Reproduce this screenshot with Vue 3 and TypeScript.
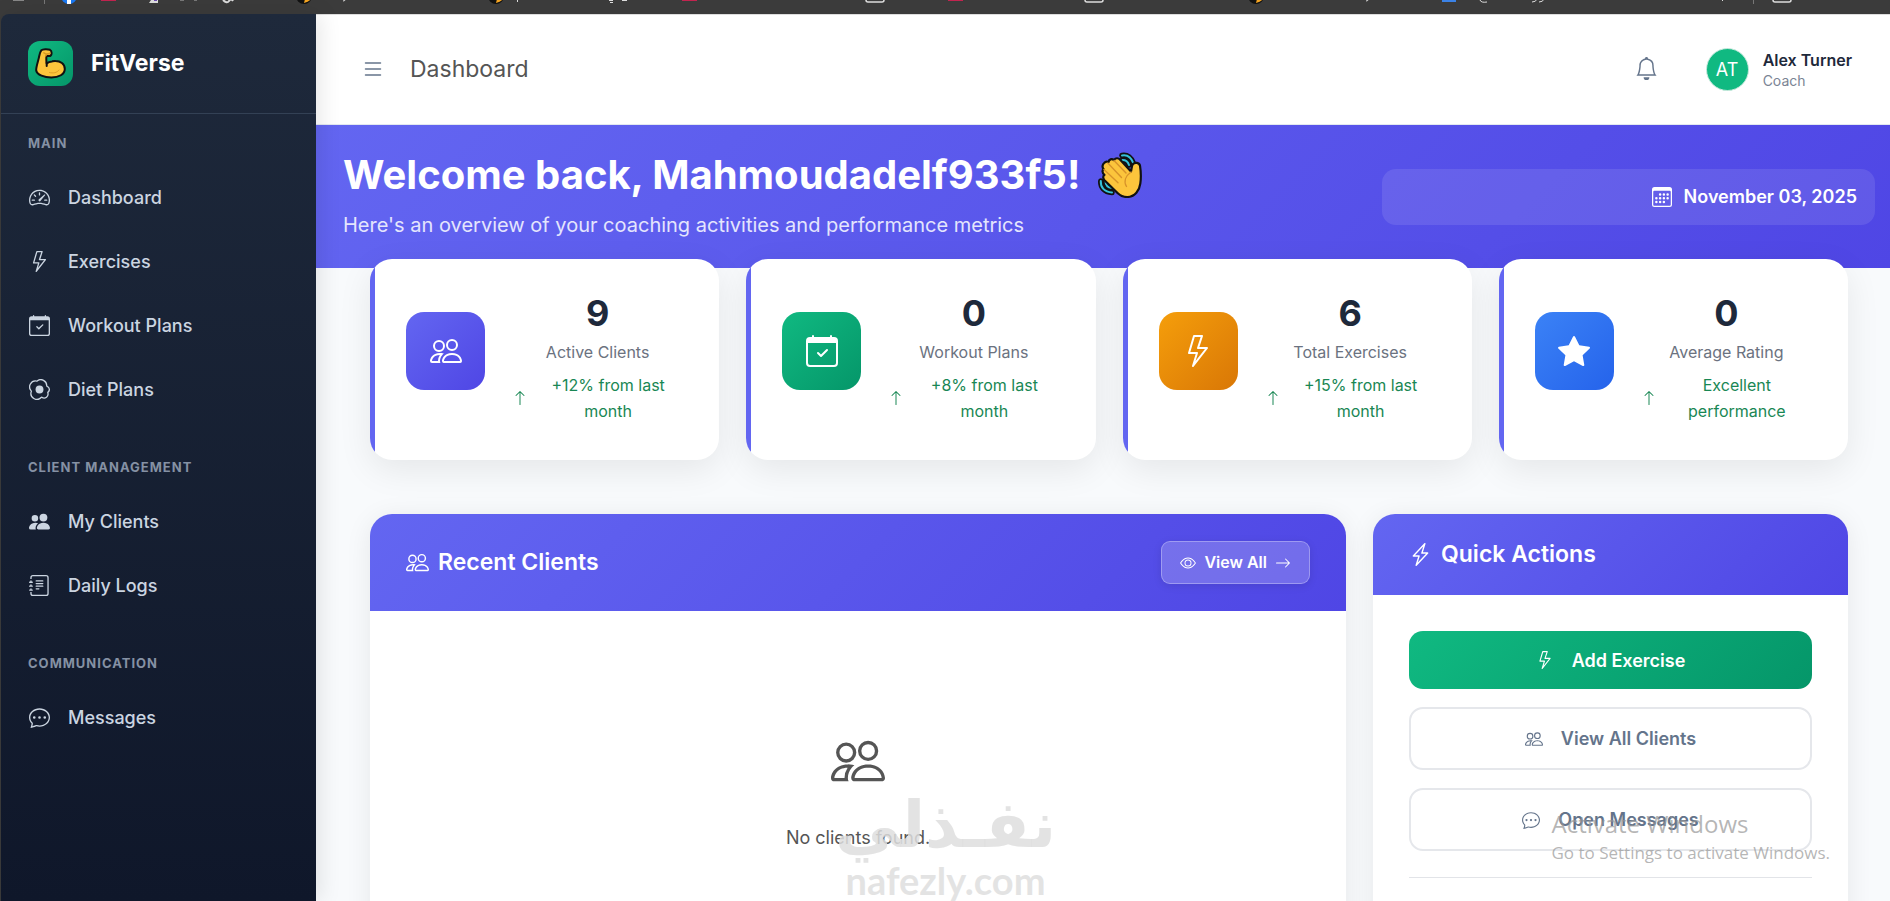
<script setup lang="ts">
import { h, type FunctionalComponent } from 'vue'

const icons: Record<string, string[]> = {
  speedometer: [
    'M8 4a.5.5 0 0 1 .5.5V6a.5.5 0 0 1-1 0V4.5A.5.5 0 0 1 8 4M3.732 5.732a.5.5 0 0 1 .707 0l.915.914a.5.5 0 1 1-.708.708l-.914-.915a.5.5 0 0 1 0-.707M2 10a.5.5 0 0 1 .5-.5h1.586a.5.5 0 0 1 0 1H2.5A.5.5 0 0 1 2 10m9.5 0a.5.5 0 0 1 .5-.5h1.5a.5.5 0 0 1 0 1H12a.5.5 0 0 1-.5-.5m.754-4.246a.39.39 0 0 0-.527-.02L7.547 9.31a.91.91 0 1 0 1.302 1.258l3.434-4.297a.39.39 0 0 0-.029-.518z',
    'M0 10a8 8 0 1 1 15.547 2.661c-.442 1.253-1.845 1.602-2.932 1.25C11.309 13.488 9.475 13 8 13c-1.474 0-3.31.488-4.615.911-1.087.352-2.49.003-2.932-1.25A8 8 0 0 1 0 10m8-7a7 7 0 0 0-6.603 9.329c.203.575.923.876 1.68.63C4.397 12.533 6.358 12 8 12s3.604.532 4.923.96c.757.245 1.477-.056 1.68-.631A7 7 0 0 0 8 3',
  ],
  lightning: [
    'M5.52.359A.5.5 0 0 1 6 0h4a.5.5 0 0 1 .474.658L8.694 6H12.5a.5.5 0 0 1 .395.807l-7 9a.5.5 0 0 1-.873-.454L6.823 9.5H3.5a.5.5 0 0 1-.48-.641zM6.374 1 4.168 8.5H7.5a.5.5 0 0 1 .478.647L6.78 13.04 11.478 7H8a.5.5 0 0 1-.474-.658L9.306 1z',
  ],
  charge: [
    'M11.251.068a.5.5 0 0 1 .227.58L9.677 6.5H13a.5.5 0 0 1 .364.843l-8 8.5a.5.5 0 0 1-.842-.49L6.323 9.5H3a.5.5 0 0 1-.364-.843l8-8.5a.5.5 0 0 1 .615-.09zM4.157 8.5H7a.5.5 0 0 1 .478.647L6.11 13.59l5.732-6.09H9a.5.5 0 0 1-.478-.647L9.89 2.41z',
  ],
  calendarCheck: [
    'M10.854 7.146a.5.5 0 0 1 0 .708l-3 3a.5.5 0 0 1-.708 0l-1.5-1.5a.5.5 0 1 1 .708-.708L7.5 9.793l2.646-2.647a.5.5 0 0 1 .708 0',
    'M3.5 0a.5.5 0 0 1 .5.5V1h8V.5a.5.5 0 0 1 1 0V1h1a2 2 0 0 1 2 2v11a2 2 0 0 1-2 2H2a2 2 0 0 1-2-2V3a2 2 0 0 1 2-2h1V.5a.5.5 0 0 1 .5-.5M1 4v10a1 1 0 0 0 1 1h12a1 1 0 0 0 1-1V4z',
  ],
  egg: [
    'M8 11a3 3 0 1 0 0-6 3 3 0 0 0 0 6',
    'M13.997 5.17a5 5 0 0 0-8.101-4.09A5 5 0 0 0 1.28 9.342a5 5 0 0 0 8.336 5.109 3.5 3.5 0 0 0 5.201-4.065 3.001 3.001 0 0 0-.822-5.216zm-1-.034a1 1 0 0 0 .668.977 2.001 2.001 0 0 1 .547 3.478 1 1 0 0 0-.341 1.113 2.5 2.5 0 0 1-3.715 2.905 1 1 0 0 0-1.262.152 4 4 0 0 1-6.67-4.087 1 1 0 0 0-.2-1 4 4 0 0 1 3.693-6.61 1 1 0 0 0 .8-.2 4 4 0 0 1 6.48 3.273z',
  ],
  people: [
    'M15 14s1 0 1-1-1-4-5-4-5 3-5 4 1 1 1 1zm-7.978-1L7 12.996c.001-.264.167-1.03.76-1.72C8.312 10.629 9.282 10 11 10c1.717 0 2.687.63 3.24 1.276.593.69.758 1.457.76 1.72l-.008.002-.014.002zM11 7a2 2 0 1 0 0-4 2 2 0 0 0 0 4m3-2a3 3 0 1 1-6 0 3 3 0 0 1 6 0M6.936 9.28a6 6 0 0 0-1.23-.247A7 7 0 0 0 5 9c-4 0-5 3-5 4q0 1 1 1h4.216A2.24 2.24 0 0 1 5 13c0-1.01.377-2.042 1.09-2.904.243-.294.526-.569.846-.816M4.92 10A5.5 5.5 0 0 0 4 13H1c0-.26.164-1.03.76-1.724.545-.636 1.492-1.256 3.16-1.275ZM1.5 5.5a3 3 0 1 1 6 0 3 3 0 0 1-6 0m3-2a2 2 0 1 0 0 4 2 2 0 0 0 0-4',
  ],
  peopleFill: [
    'M7 14s-1 0-1-1 1-4 5-4 5 3 5 4-1 1-1 1zm4-6a3 3 0 1 0 0-6 3 3 0 0 0 0 6m-5.784 6A2.24 2.24 0 0 1 5 13c0-1.355.68-2.75 1.936-3.72A6.3 6.3 0 0 0 5 9c-4 0-5 3-5 4s1 1 1 1zM4.5 8a2.5 2.5 0 1 0 0-5 2.5 2.5 0 0 0 0 5',
  ],
  journal: [
    'M5 10.5a.5.5 0 0 1 .5-.5h2a.5.5 0 0 1 0 1h-2a.5.5 0 0 1-.5-.5m0-2a.5.5 0 0 1 .5-.5h5a.5.5 0 0 1 0 1h-5a.5.5 0 0 1-.5-.5m0-2a.5.5 0 0 1 .5-.5h5a.5.5 0 0 1 0 1h-5a.5.5 0 0 1-.5-.5m0-2a.5.5 0 0 1 .5-.5h5a.5.5 0 0 1 0 1h-5a.5.5 0 0 1-.5-.5',
    'M3 0h10a2 2 0 0 1 2 2v12a2 2 0 0 1-2 2H3a2 2 0 0 1-2-2v-1h1v1a1 1 0 0 0 1 1h10a1 1 0 0 0 1-1V2a1 1 0 0 0-1-1H3a1 1 0 0 0-1 1v1H1V2a2 2 0 0 1 2-2',
    'M1 5v-.5a.5.5 0 0 1 1 0V5h.5a.5.5 0 0 1 0 1h-2a.5.5 0 0 1 0-1zm0 3v-.5a.5.5 0 0 1 1 0V8h.5a.5.5 0 0 1 0 1h-2a.5.5 0 0 1 0-1zm0 3v-.5a.5.5 0 0 1 1 0v.5h.5a.5.5 0 0 1 0 1h-2a.5.5 0 0 1 0-1z',
  ],
  chat: [
    'M5 8a1 1 0 1 1-2 0 1 1 0 0 1 2 0m4 0a1 1 0 1 1-2 0 1 1 0 0 1 2 0m3 1a1 1 0 1 0 0-2 1 1 0 0 0 0 2',
    'm2.165 15.803.02-.004c1.83-.363 2.948-.842 3.468-1.105A9 9 0 0 0 8 15c4.418 0 8-3.134 8-7s-3.582-7-8-7-8 3.134-8 7c0 1.76.743 3.37 1.97 4.6a10.4 10.4 0 0 1-.524 2.318l-.003.011a11 11 0 0 1-.244.637c-.079.186.074.394.273.362a22 22 0 0 0 .693-.125m.8-3.108a1 1 0 0 0-.287-.801C1.618 10.83 1 9.468 1 8c0-3.192 3.004-6 7-6s7 2.808 7 6-3.004 6-7 6a8 8 0 0 1-2.088-.272 1 1 0 0 0-.711.074c-.387.196-1.24.57-2.634.893a11 11 0 0 0 .398-2',
  ],
  list: [
    'M2.5 12a.5.5 0 0 1 .5-.5h10a.5.5 0 0 1 0 1H3a.5.5 0 0 1-.5-.5m0-4a.5.5 0 0 1 .5-.5h10a.5.5 0 0 1 0 1H3a.5.5 0 0 1-.5-.5m0-4a.5.5 0 0 1 .5-.5h10a.5.5 0 0 1 0 1H3a.5.5 0 0 1-.5-.5',
  ],
  bell: [
    'M8 16a2 2 0 0 0 2-2H6a2 2 0 0 0 2 2M8 1.918l-.797.161A4 4 0 0 0 4 6c0 .628-.134 2.197-.459 3.742-.16.767-.376 1.566-.663 2.258h10.244c-.287-.692-.502-1.49-.663-2.258C12.134 8.197 12 6.628 12 6a4 4 0 0 0-3.203-3.92zM14.22 12c.223.447.481.801.78 1H1c.299-.199.557-.553.78-1C2.68 10.2 3 6.88 3 6c0-2.42 1.72-4.44 4.005-4.901a1 1 0 1 1 1.99 0A5 5 0 0 1 13 6c0 .88.32 4.2 1.22 6',
  ],
  calendar: [
    'M14 0H2a2 2 0 0 0-2 2v12a2 2 0 0 0 2 2h12a2 2 0 0 0 2-2V2a2 2 0 0 0-2-2M1 3.857C1 3.384 1.448 3 2 3h12c.552 0 1 .384 1 .857v10.286c0 .473-.448.857-1 .857H2c-.552 0-1-.384-1-.857z',
    'M6.5 7a1 1 0 1 0 0-2 1 1 0 0 0 0 2m3 0a1 1 0 1 0 0-2 1 1 0 0 0 0 2m3 0a1 1 0 1 0 0-2 1 1 0 0 0 0 2m-9 3a1 1 0 1 0 0-2 1 1 0 0 0 0 2m3 0a1 1 0 1 0 0-2 1 1 0 0 0 0 2m3 0a1 1 0 1 0 0-2 1 1 0 0 0 0 2m3 0a1 1 0 1 0 0-2 1 1 0 0 0 0 2m-9 3a1 1 0 1 0 0-2 1 1 0 0 0 0 2m3 0a1 1 0 1 0 0-2 1 1 0 0 0 0 2m3 0a1 1 0 1 0 0-2 1 1 0 0 0 0 2',
  ],
  arrowUp: [
    'M8 15a.5.5 0 0 0 .5-.5V2.707l3.146 3.147a.5.5 0 0 0 .708-.708l-4-4a.5.5 0 0 0-.708 0l-4 4a.5.5 0 1 0 .708.708L7.5 2.707V14.5a.5.5 0 0 0 .5.5',
  ],
  arrowRight: [
    'M1 8a.5.5 0 0 1 .5-.5h11.793l-3.147-3.146a.5.5 0 0 1 .708-.708l4 4a.5.5 0 0 1 0 .708l-4 4a.5.5 0 0 1-.708-.708L13.293 8.5H1.5A.5.5 0 0 1 1 8',
  ],
  eye: [
    'M16 8s-3-5.5-8-5.5S0 8 0 8s3 5.5 8 5.5S16 8 16 8M1.173 8a13 13 0 0 1 1.66-2.043C4.12 4.668 5.88 3.5 8 3.5s3.879 1.168 5.168 2.457A13 13 0 0 1 14.828 8q-.086.13-.195.288c-.335.48-.83 1.12-1.465 1.755C11.879 11.332 10.119 12.5 8 12.5s-3.879-1.168-5.168-2.457A13 13 0 0 1 1.172 8z',
    'M8 5.5a2.5 2.5 0 1 0 0 5 2.5 2.5 0 0 0 0-5M4.5 8a3.5 3.5 0 1 1 7 0 3.5 3.5 0 0 1-7 0',
  ],
  star: [
    'M3.612 15.443c-.386.198-.824-.149-.746-.592l.83-4.73L.173 6.765c-.329-.314-.158-.888.283-.95l4.898-.696L7.538.792c.197-.39.73-.39.927 0l2.184 4.327 4.898.696c.441.062.612.636.282.95l-3.522 3.356.83 4.73c.078.443-.36.79-.746.592L8 13.187l-4.389 2.256z',
  ],
}

const Icon: FunctionalComponent<{ name: string }> = (props) =>
  h(
    'svg',
    { viewBox: '0 0 16 16', fill: 'currentColor', 'aria-hidden': 'true' },
    icons[props.name].map((d) => h('path', { d, 'fill-rule': 'evenodd' })),
  )
Icon.props = ['name']

interface NavItem { label: string; icon: string }
interface NavSection { title: string; items: NavItem[] }
interface Stat { value: number; label: string; trend: string; icon: string; tone: string }

const sections: NavSection[] = [
  {
    title: 'MAIN',
    items: [
      { label: 'Dashboard', icon: 'speedometer' },
      { label: 'Exercises', icon: 'lightning' },
      { label: 'Workout Plans', icon: 'calendarCheck' },
      { label: 'Diet Plans', icon: 'egg' },
    ],
  },
  {
    title: 'CLIENT MANAGEMENT',
    items: [
      { label: 'My Clients', icon: 'peopleFill' },
      { label: 'Daily Logs', icon: 'journal' },
    ],
  },
  { title: 'COMMUNICATION', items: [{ label: 'Messages', icon: 'chat' }] },
]

const stats: Stat[] = [
  { value: 9, label: 'Active Clients', trend: '+12% from last month', icon: 'people', tone: 'indigo' },
  { value: 0, label: 'Workout Plans', trend: '+8% from last month', icon: 'calendarCheck', tone: 'green' },
  { value: 6, label: 'Total Exercises', trend: '+15% from last month', icon: 'lightning', tone: 'amber' },
  { value: 0, label: 'Average Rating', trend: 'Excellent performance', icon: 'star', tone: 'blue' },
]
</script>

<template>
  <div class="screen">
    <div class="browser-edge">
      <svg class="edge-art" width="1890" height="14" viewBox="0 0 1890 14" aria-hidden="true">
        <path d="M13 .5h11" stroke="#888" />
        <path d="M44.500 0v4M1753.500 0v4" stroke="#777" />
        <circle cx="69" cy="-4" r="8" fill="#1877f2" />
        <path d="M67 0h4v4h-4z" fill="#fff" />
        <path d="M101 0h15v1h-15zM682 0h15v1h-15zM948 0h15v1h-15z" fill="#c2244f" />
        <path d="M151 0h7v3h-9z" fill="#ddd" />
        <path d="M154 0h3v1h-3z" fill="#6a4bb0" />
        <path d="M180 .5h4M194 .5h3" stroke="#777" />
        <path d="M223 0q4 4 6 1t4 0" fill="none" stroke="#ddd" stroke-width="2" />
        <g v-for="x in [304, 496, 1256]" :key="x">
          <circle :cx="x" cy="-4" r="8" fill="#111" />
          <path :d="`M${x} 3q5-1 7-4h-6z`" fill="#f6a623" />
        </g>
        <path d="M343 1q2 0 3-2M1366 1q2 0 3-2M517.500 0v2M1722.500 0v1M609 .5h4M610 2.500h3M622 .5h5M1480 0q1 3 7 2M1532 2q4 0 5-3M1539 2q4 0 5-3" fill="none" stroke="#ddd" />
        <g fill="none" stroke="#ddd" stroke-width="1.500">
          <rect x="866" y="-10" width="18" height="12" rx="2" />
          <rect x="1085" y="-10" width="18" height="12" rx="2" />
          <rect x="1773" y="-10" width="18" height="12" rx="2" />
        </g>
        <path d="M1442 0h14v2h-14z" fill="#3b82e6" />
      </svg>
    </div>

    <div class="app">
      <aside class="sidebar">
        <div class="brand">
          <span class="logo">
            <svg viewBox="0 0 32 32" width="32" height="32" aria-hidden="true">
              <path d="M6.300 2.300C7.800 1 12.500.9 15 1.800c1.600.7 1.700 2.400 1.500 4-.2 1.600-1.300 2.300-2.700 2.200-1 0-1.800 0-2.300-.1-.3 2.600-.3 5.100.2 7.700 1.200-1.400 3.200-2.200 5.300-2.200 1-.2 2.200-.5 3.500-.4 4.800 0 9.300 2.800 9.300 8 0 5.300-6 8.500-13.500 8.500C9.500 29.500 2 27 1.200 22.500c-.3-3 1.600-8.300 2.600-12.500.6-2.600.8-5.700 2.500-7.700z" fill="#fcc53c" stroke="#111" stroke-width="2" stroke-linejoin="round" />
              <path d="M10.600 7.900c.5-1.200 1.600-2.200 3-2M8.900 4.800q2.500 2 6 .4" fill="none" stroke="#d99a25" stroke-width="1.500" stroke-linecap="round" />
              <path d="M14.500 24.500c3.500 1 7.500.4 9.500-2.500" fill="none" stroke="#e0a127" stroke-width="1" stroke-linecap="round" />
              <path d="M11.700 14.800v3.300" stroke="#111" stroke-width="2" stroke-linecap="round" />
            </svg>
          </span>
          <span class="brand-name">FitVerse</span>
        </div>
        <nav class="nav">
          <section v-for="section in sections" :key="section.title" class="nav-section">
            <h2 class="nav-title">{{ section.title }}</h2>
            <ul class="nav-list">
              <li v-for="item in section.items" :key="item.label">
                <a href="#" class="nav-link"><Icon class="nav-icon" :name="item.icon" />{{ item.label }}</a>
              </li>
            </ul>
          </section>
        </nav>
      </aside>

      <main class="main">
        <header class="topbar">
          <button class="icon-button" type="button" aria-label="Toggle menu"><Icon class="icon-menu" name="list" /></button>
          <span class="crumb">Dashboard</span>
          <button class="icon-button bell" type="button" aria-label="Notifications"><Icon class="icon-bell" name="bell" /></button>
          <div class="user">
            <span class="avatar">AT</span>
            <div>
              <div class="user-name">Alex Turner</div>
              <div class="user-role">Coach</div>
            </div>
          </div>
        </header>

        <section class="banner">
          <div class="banner-text">
            <h1 class="title">
              Welcome back, Mahmoudadelf933f5!
              <svg class="wave" viewBox="0 0 44 46" aria-hidden="true">
                <g fill="none" stroke-linecap="round">
                  <path d="M24 3.500c5.500-1 9.500 2.500 11.500 8M24.500 8c3 0 5.500 1.500 6.500 5" stroke="#111" stroke-width="5.500" />
                  <path d="M24 3.500c5.500-1 9.500 2.500 11.500 8M24.500 8c3 0 5.500 1.500 6.500 5" stroke="#35c1d8" stroke-width="2" />
                  <path d="M2.800 29c-.5 6 3.500 11 11.200 11.500M7.500 29c0 4 2.500 6.500 6.500 7" stroke="#111" stroke-width="5.500" />
                  <path d="M2.800 29c-.5 6 3.500 11 11.200 11.500M7.500 29c0 4 2.500 6.500 6.500 7" stroke="#35c1d8" stroke-width="2" />
                </g>
                <path d="M6.200 11c1.300-1.600 2.900-1.500 4.300-.9.400-3 3.300-3.600 5.500-2 1.700-2.500 4.400-2.300 6.200-.3L33 19.500c.7-2.300.5-5.200 1.800-7.300 1.900-2.300 6.600-1.700 7.200 1.500.7 4.500 1 13.300.3 18-.7 6.500-5.500 13-12.800 13.300-3.500.1-7-1-9.700-3.700L6.500 28.200c-1.900-2-1.500-4.300-.1-5.300-2.300-2-2.300-4.500-.8-5.700C3.800 15.200 4.500 12.400 6.200 11z" fill="#fcc53c" stroke="#111" stroke-width="2.200" stroke-linejoin="round" />
                <path d="M16 8.500 28 21M9.800 11 23.500 25.500M6 17.500l14 13.300M33 20c-5.500 4-7.500 9.500-4.500 14.500" fill="none" stroke="#d7932a" stroke-width="1.400" stroke-linecap="round" />
              </svg>
            </h1>
            <p class="subtitle">Here's an overview of your coaching activities and performance metrics</p>
          </div>
          <div class="date"><Icon class="date-icon" name="calendar" />November 03, 2025</div>
        </section>

        <div class="content">
          <div class="stats">
            <article v-for="stat in stats" :key="stat.label" class="stat">
              <span class="stat-icon" :class="stat.tone"><Icon class="stat-glyph" :name="stat.icon" /></span>
              <div class="stat-body">
                <div class="stat-value">{{ stat.value }}</div>
                <div class="stat-label">{{ stat.label }}</div>
                <div class="stat-trend">
                  <Icon class="trend-icon" name="arrowUp" />
                  <span class="trend-text">{{ stat.trend }}</span>
                </div>
              </div>
            </article>
          </div>

          <div class="panels">
            <section class="panel">
              <header class="panel-head">
                <h2 class="panel-title"><Icon class="panel-icon" name="people" />Recent Clients</h2>
                <a href="#" class="view-all"><Icon class="small-icon" name="eye" />View All<Icon class="small-icon" name="arrowRight" /></a>
              </header>
              <div class="empty">
                <Icon class="empty-icon" name="people" />
                <p class="empty-text">No clients found.</p>
              </div>
            </section>

            <section class="panel">
              <header class="panel-head">
                <h2 class="panel-title"><Icon class="panel-icon" name="charge" />Quick Actions</h2>
              </header>
              <div class="actions">
                <button type="button" class="action primary"><Icon class="action-icon" name="lightning" />Add Exercise</button>
                <button type="button" class="action"><Icon class="action-icon" name="people" />View All Clients</button>
                <button type="button" class="action"><Icon class="action-icon" name="chat" />Open Messages</button>
                <hr class="rule" />
              </div>
            </section>
          </div>
        </div>
      </main>
    </div>

    <div class="watermark">
      <span class="mark-ar" lang="ar" dir="rtl">نفـذلي</span>
      <span class="mark-en">nafezly.com</span>
    </div>
    <div class="activate">
      <div class="activate-title">Activate Windows</div>
      <div class="activate-text">Go to Settings to activate Windows.</div>
    </div>
  </div>
</template>

<style>
body {
  margin: 0;
  background: #3b3b3b;
}
</style>

<style scoped>
.screen {
  position: relative;
  display: flex;
  flex-direction: column;
  height: 100vh;
  overflow: hidden;
  background: #3b3b3b;
  font-family: Inter, "Liberation Sans", sans-serif;
  font-size: 18px;
  line-height: 27px;
}
.screen *,
.screen *::before {
  box-sizing: border-box;
}
.screen svg {
  flex: none;
}
.browser-edge {
  flex: none;
  height: 14px;
  overflow: hidden;
}
.edge-art {
  display: block;
}
.app {
  flex: 1;
  display: flex;
  min-height: 0;
  padding-left: 1px;
}
.sidebar {
  position: relative;
  z-index: 2;
  flex: none;
  width: 315px;
  border-top-left-radius: 8px;
  background: linear-gradient(180deg, #1e293b 0%, #0f172a 100%);
  box-shadow: 4px 0 22px rgba(0, 0, 0, 0.1);
}
.brand {
  display: flex;
  align-items: center;
  gap: 18px;
  padding: 27px;
  border-bottom: 1px solid #334155;
}
.logo {
  display: flex;
  align-items: center;
  justify-content: center;
  width: 45px;
  height: 45px;
  border-radius: 12px;
  background: linear-gradient(135deg, #10b981, #059669);
}
.brand-name {
  color: #fff;
  font-size: 23px;
  font-weight: 700;
}
.nav {
  padding-top: 19px;
}
.nav-section {
  margin-bottom: 38px;
}
.nav-title {
  margin: 0 27px 14px;
  color: #8591a4;
  font-size: 13px;
  font-weight: 700;
  line-height: 20px;
  letter-spacing: 1px;
}
.nav-list {
  display: flex;
  flex-direction: column;
  gap: 4px;
  margin: 0;
  padding: 0;
  list-style: none;
}
.nav-link {
  display: flex;
  align-items: center;
  gap: 18px;
  height: 60px;
  padding: 0 28px;
  color: #cbd5e1;
  font-weight: 500;
  text-decoration: none;
}
.nav-icon {
  width: 21px;
  height: 21px;
}
.main {
  flex: 1;
  min-width: 0;
  background: #f8fafc;
}
.topbar {
  display: flex;
  align-items: center;
  height: 111px;
  padding: 0 38px 0 45px;
  border-top: 1px solid #ddd;
  border-bottom: 1px solid #e2e8f0;
  background: #fff;
}
.icon-button {
  display: flex;
  padding: 0 0 2px;
  border: 0;
  background: none;
  color: #64748b;
}
.icon-menu {
  width: 24px;
  height: 24px;
}
.icon-bell {
  width: 23px;
  height: 23px;
}
.crumb {
  margin-left: 25px;
  color: #555;
  font-size: 23px;
}
.bell {
  margin-left: auto;
}
.user {
  display: flex;
  align-items: center;
  gap: 14px;
  margin-left: 48px;
}
.avatar {
  display: flex;
  align-items: center;
  justify-content: center;
  width: 43px;
  height: 43px;
  border: 1px solid #c7e9dd;
  border-radius: 50%;
  background: #10b981;
  color: #fff;
}
.user-name {
  color: #1e293b;
  font-size: 16px;
  font-weight: 600;
  line-height: 22px;
}
.user-role {
  color: #7b8494;
  font-size: 14px;
  line-height: 20px;
}
.banner {
  display: flex;
  align-items: center;
  justify-content: space-between;
  height: 143px;
  padding: 0 15px 0 27px;
  background: linear-gradient(135deg, #6366f1 0%, #4f46e5 100%);
  color: #fff;
}
.banner-text {
  padding-bottom: 4px;
}
.title {
  display: flex;
  align-items: center;
  gap: 18px;
  margin: 0 0 10px;
  font-size: 40px;
  font-weight: 700;
  line-height: 50px;
}
.wave {
  width: 44px;
  height: 46px;
}
.subtitle {
  margin: 0;
  color: #e4e5fd;
  font-size: 20px;
  line-height: 30px;
}
.date {
  display: flex;
  align-items: center;
  justify-content: flex-end;
  gap: 12px;
  width: 32.2%;
  height: 56px;
  padding: 0 18px;
  border-radius: 14px;
  background: rgba(255, 255, 255, 0.1);
  font-weight: 600;
}
.date-icon {
  width: 20px;
  height: 20px;
}
.content {
  position: relative;
  margin-top: -9px;
  padding: 0 42px 0 54px;
}
.stats {
  display: grid;
  grid-template-columns: repeat(4, 1fr);
  gap: 27px;
  margin-bottom: 54px;
}
.stat {
  position: relative;
  display: flex;
  align-items: center;
  gap: 27px;
  overflow: hidden;
  padding: 36px;
  border-radius: 22px;
  background: #fff;
  box-shadow: 0 10px 34px rgba(0, 0, 0, 0.08);
  text-align: center;
}
.stat::before {
  content: "";
  position: absolute;
  inset: 0 auto 0 0;
  width: 5px;
  background: #6366f1;
}
.stat-icon {
  display: flex;
  flex: none;
  align-items: center;
  justify-content: center;
  width: 79px;
  height: 78px;
  margin-bottom: 18px;
  border-radius: 18px;
  color: #fff;
}
.stat-glyph {
  width: 32px;
  height: 32px;
}
.indigo {
  background: linear-gradient(135deg, #6366f1, #4f46e5);
}
.green {
  background: linear-gradient(135deg, #10b981, #059669);
}
.amber {
  background: linear-gradient(135deg, #f59e0b, #d97706);
}
.blue {
  background: linear-gradient(135deg, #3b82f6, #2563eb);
}
.stat-body {
  flex: 1;
}
.stat-value {
  margin-bottom: 8px;
  color: #1e293b;
  font-size: 36px;
  font-weight: 700;
  line-height: 36px;
}
.stat-label {
  margin-bottom: 7px;
  color: #6b7280;
  font-size: 16px;
  line-height: 26px;
}
.stat-trend {
  display: flex;
  align-items: center;
  gap: 5px;
  color: #198754;
  font-size: 16px;
  line-height: 26px;
}
.trend-icon {
  width: 16px;
  height: 16px;
}
.trend-text {
  flex: 1;
}
.panels {
  display: grid;
  grid-template-columns: 976fr 475fr;
  gap: 27px;
}
.panel {
  overflow: hidden;
  border-radius: 22px;
  background: #fff;
  box-shadow: 0 4px 27px rgba(0, 0, 0, 0.08);
}
.panel-head {
  display: flex;
  align-items: center;
  justify-content: space-between;
  padding: 27px 36px;
  background: linear-gradient(135deg, #6366f1 0%, #4f46e5 100%);
  color: #fff;
}
.panel-title {
  display: flex;
  align-items: center;
  gap: 9px;
  margin: 0;
  font-size: 23px;
  font-weight: 600;
  line-height: 27px;
}
.panel-icon {
  width: 23px;
  height: 23px;
}
.view-all {
  display: flex;
  align-items: center;
  gap: 8px;
  height: 43px;
  padding: 0 18px;
  border: 1px solid rgba(255, 255, 255, 0.3);
  border-radius: 9px;
  background: rgba(255, 255, 255, 0.2);
  box-shadow: 0 2px 8px rgba(0, 0, 0, 0.1);
  color: #fff;
  font-size: 16px;
  font-weight: 600;
  text-decoration: none;
}
.small-icon {
  width: 16px;
  height: 16px;
}
.empty {
  display: flex;
  flex-direction: column;
  align-items: center;
  gap: 36px;
  padding: 123px 36px;
  color: #555;
}
.empty-icon {
  width: 54px;
  height: 54px;
}
.empty-text {
  margin: 0;
}
.actions {
  display: flex;
  flex-direction: column;
  gap: 18px;
  padding: 36px;
}
.action {
  display: flex;
  align-items: center;
  justify-content: center;
  gap: 18px;
  height: 63px;
  padding: 0 18px;
  border: 2px solid #e5e7eb;
  border-radius: 14px;
  background: #fff;
  color: #64748b;
  font: inherit;
  font-weight: 600;
}
.primary {
  height: 58px;
  border: 0;
  background: linear-gradient(135deg, #10b981, #059669);
  color: #fff;
}
.action-icon {
  width: 18px;
  height: 18px;
}
.rule {
  width: 100%;
  margin: 8px 0 0;
  border: 0;
  border-top: 1px solid #e2e4e8;
}
.watermark {
  position: absolute;
  z-index: 5;
  top: 785px;
  left: 840px;
  display: flex;
  flex-direction: column;
  align-items: center;
  width: 211px;
  color: rgba(222, 222, 222, 0.85);
  font-weight: 700;
  white-space: nowrap;
  pointer-events: none;
}
.mark-ar {
  font-family: "DejaVu Sans", sans-serif;
  font-size: 65px;
  line-height: 80px;
}
.mark-en {
  font-family: Lato, sans-serif;
  font-size: 38px;
  line-height: 30px;
}
.activate {
  position: absolute;
  z-index: 5;
  right: 60px;
  bottom: 35px;
  color: rgba(150, 150, 150, 0.7);
  font-family: "Open Sans", "Noto Sans", sans-serif;
  pointer-events: none;
}
.activate-title {
  font-size: 24px;
  line-height: 32px;
}
.activate-text {
  font-size: 17px;
  line-height: 26px;
}
</style>
